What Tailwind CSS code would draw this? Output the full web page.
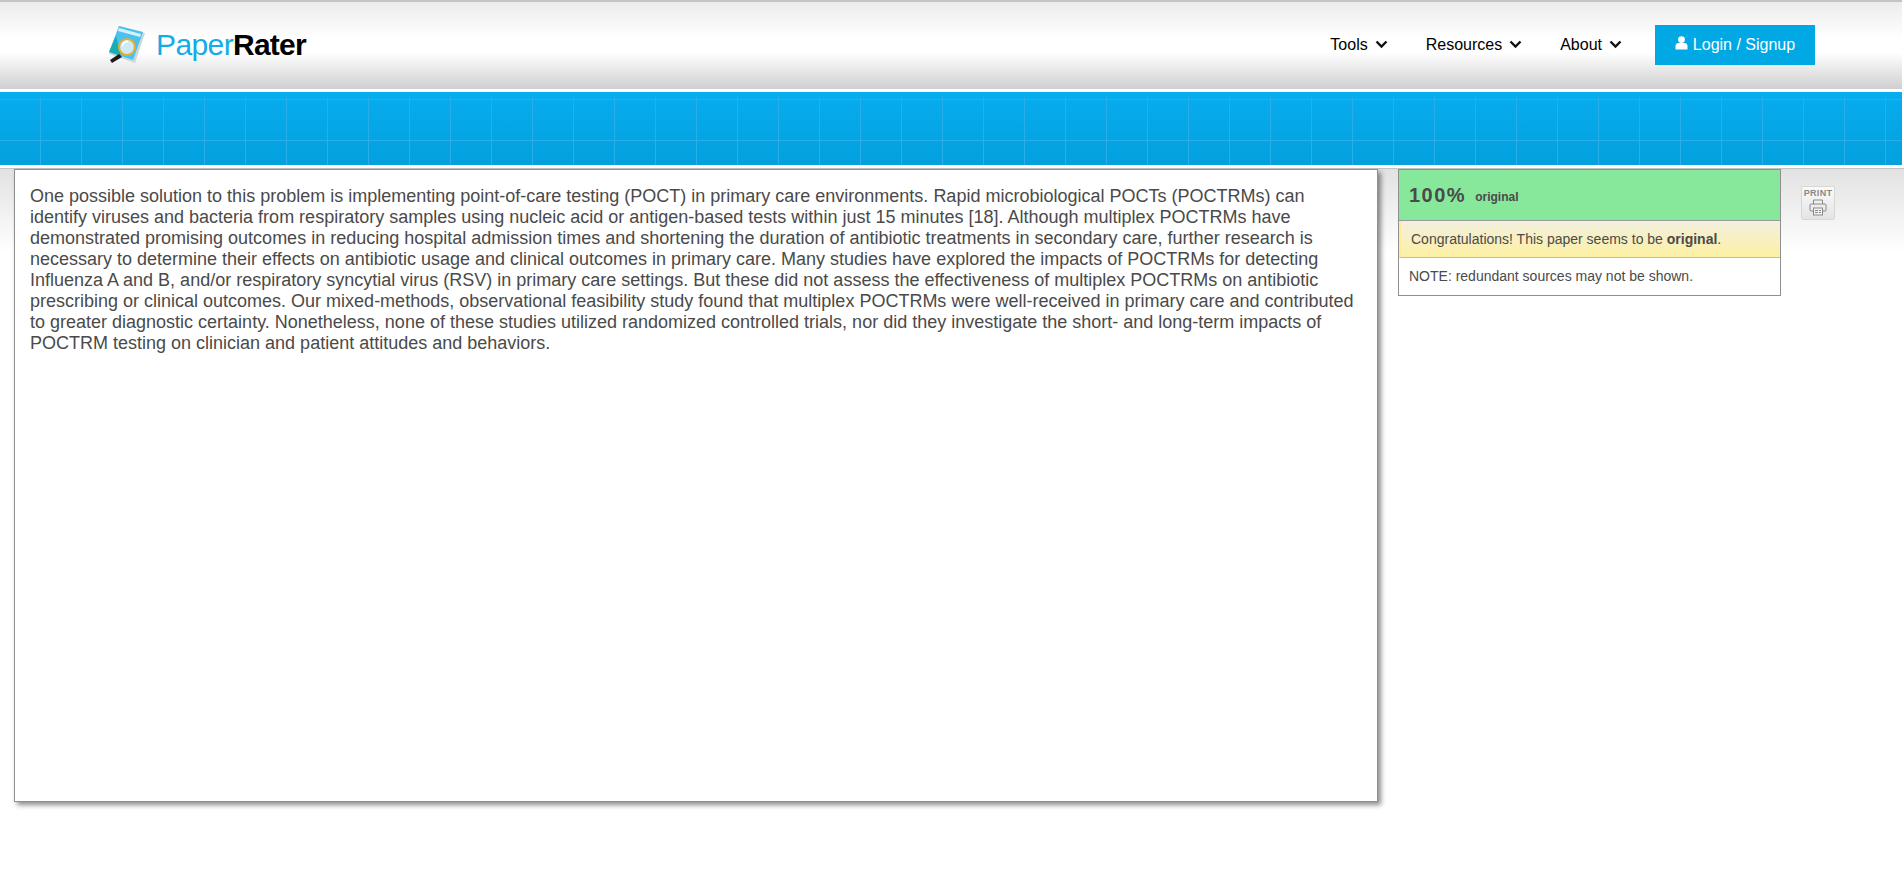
<!DOCTYPE html>
<html lang="en">
<head>
    <meta charset="UTF-8">
    <title>PaperRater</title>
    <script src="https://cdn.jsdelivr.net/npm/@tailwindcss/browser@4"></script>
</head>
<body class="bg-white h-[891px] overflow-hidden font-['Liberation_Sans',Arial,sans-serif] text-[#4a4a4a]">
    <!-- Header -->
    <header class="h-[89px] mr-[2px] border-t-2 border-[#c4c4c4] bg-[linear-gradient(to_bottom,#ececec_0%,#fff_42%,#fff_58%,#cfcfcf_100%)] flex items-center justify-between pl-[108px] pr-[87px]">
        <a class="flex items-center gap-[10px] mt-[-2px]">
            <svg width="38" height="38" viewBox="0 0 38 38">
                <path d="M11 0 L37 7 L27 37 L1 28 Z" fill="#ccd6db"/>
                <path d="M11 0 L35 6 L25 34 L1 26 Z" fill="#4cc0ee"/>
                <path d="M11 2 L33 8 L32 11 L10 5 Z" fill="#d4f1fc"/>
                <path d="M8 10 L1 26 L13 30 Z" fill="#1aaeb4"/>
                <path d="M11 28 L2 34 L4 37 L14 31 Z" fill="#1c1c1c"/>
                <circle cx="19" cy="21" r="8" fill="#cfe9f5" stroke="#dcb035" stroke-width="2.2"/>
                <path d="M14.5 20 A5 5 0 0 1 20 15.5" fill="none" stroke="#fff" stroke-width="1.8"/>
            </svg>
            <span class="text-[30px] leading-none mt-[1px]"><span class="text-[#12ace8] tracking-[-0.6px]">Paper</span><span class="text-black font-bold tracking-[-0.8px]">Rater</span></span>
        </a>
        <nav class="flex items-center text-[16px] text-black mt-[-2px]">
            <a class="flex items-center gap-[7px] mr-[38px]">Tools
                <svg width="13" height="9" viewBox="0 0 13 9"><path d="M1.5 1.5 L6.5 6.5 L11.5 1.5" fill="none" stroke="#111" stroke-width="2.4"/></svg>
            </a>
            <a class="flex items-center gap-[7px] mr-[38px]">Resources
                <svg width="13" height="9" viewBox="0 0 13 9"><path d="M1.5 1.5 L6.5 6.5 L11.5 1.5" fill="none" stroke="#111" stroke-width="2.4"/></svg>
            </a>
            <a class="flex items-center gap-[7px] mr-[33px]">About
                <svg width="13" height="9" viewBox="0 0 13 9"><path d="M1.5 1.5 L6.5 6.5 L11.5 1.5" fill="none" stroke="#111" stroke-width="2.4"/></svg>
            </a>
            <a class="w-[160px] h-[40px] bg-[#00a8e4] text-white flex items-center justify-center gap-[5px]">
                <svg width="13" height="14" viewBox="0 0 13 14" class="mt-[-3px]"><circle cx="6.5" cy="3.6" r="3.4" fill="#fff"/><path d="M0.5 13.5 V10 C0.5 8 2 7 3.5 7 H9.5 C11 7 12.5 8 12.5 10 V13.5 Z" fill="#fff"/></svg>
                Login / Signup
            </a>
        </nav>
    </header>

    <!-- Blue banner -->
    <div class="h-[73px] mt-[3px] mr-[2px] bg-[linear-gradient(to_right,#2aaee8_1px,transparent_1px),linear-gradient(#2aaee8,#2aaee8),linear-gradient(#2aaee8,#2aaee8),linear-gradient(to_bottom,#07adef,#03a0dd)] bg-[size:41px_68px,100%_1px,100%_1px,100%_100%] bg-[position:40px_5px,0_7px,0_48px,0_0] bg-repeat-x"></div>

    <!-- Main area -->
    <main class="mt-[3px] h-[85px] border-t border-[#c4c4c4] bg-[linear-gradient(to_bottom,#e2e2e2,#fff)]">
        <div class="flex items-start pl-[14px]">
            <div class="w-[1364px] h-[633px] bg-white border border-[#8f8f8f] shadow-[3px_3px_5px_rgba(0,0,0,0.45)] pl-[15px] pr-[19px] pt-[16px] text-[18px] leading-[21px]">
                One possible solution to this problem is implementing point-of-care testing (POCT) in primary care environments. Rapid microbiological POCTs (POCTRMs) can identify viruses and bacteria from respiratory samples using nucleic acid or antigen-based tests within just 15 minutes [18]. Although multiplex POCTRMs have demonstrated promising outcomes in reducing hospital admission times and shortening the duration of antibiotic treatments in secondary care, further research is necessary to determine their effects on antibiotic usage and clinical outcomes in primary care. Many studies have explored the impacts of POCTRMs for detecting Influenza A and B, and/or respiratory syncytial virus (RSV) in primary care settings. But these did not assess the effectiveness of multiplex POCTRMs on antibiotic prescribing or clinical outcomes. Our mixed-methods, observational feasibility study found that multiplex POCTRMs were well-received in primary care and contributed to greater diagnostic certainty. Nonetheless, none of these studies utilized randomized controlled trials, nor did they investigate the short- and long-term impacts of POCTRM testing on clinician and patient attitudes and behaviors.
            </div>
            <aside class="ml-[20px] w-[383px] border border-[#8f8f8f] bg-white">
                <div class="h-[51px] bg-[#87e79a] border-b border-[#999] flex items-center pl-[10px]">
                    <span class="text-[20px] font-bold tracking-[1.5px]">100%</span>
                    <span class="text-[12px] font-bold ml-[9px] mt-[3px]">original</span>
                </div>
                <div class="h-[37px] border-b border-[#bbb] border-l-2 border-l-[#fdec9a] bg-[linear-gradient(to_bottom,#f3f0e0,#fdf0a2)] flex items-center pl-[10px] text-[14px]">
                    <span>Congratulations! This paper seems to be <b>original</b>.</span>
                </div>
                <div class="h-[37px] flex items-center pl-[10px] text-[14px]">NOTE: redundant sources may not be shown.</div>
            </aside>
            <a class="ml-[20px] mt-[17px] w-[34px] h-[34px] rounded-[2px] border border-[#d8d8d0] bg-[linear-gradient(to_bottom,#fafafa,#e4e4e4)] flex flex-col items-center pt-[2px]">
                <span class="text-[9px] leading-[9px] font-bold tracking-[0.3px] text-[#888]">PRINT</span>
                <svg width="18" height="17" viewBox="0 0 18 17" class="mt-[1px]" fill="none" stroke="#8a8a8a" stroke-width="1">
                    <path d="M4.5 5 V1 H13.5 V5"/>
                    <rect x="1" y="5" width="16" height="7" rx="1"/>
                    <rect x="4.5" y="9" width="9" height="7" fill="#f2f2f2"/>
                    <path d="M6 11.5 H9 M10 11.5 H12 M6 13.5 H9 M10 13.5 H12"/>
                </svg>
            </a>
        </div>
    </main>
</body>
</html>
